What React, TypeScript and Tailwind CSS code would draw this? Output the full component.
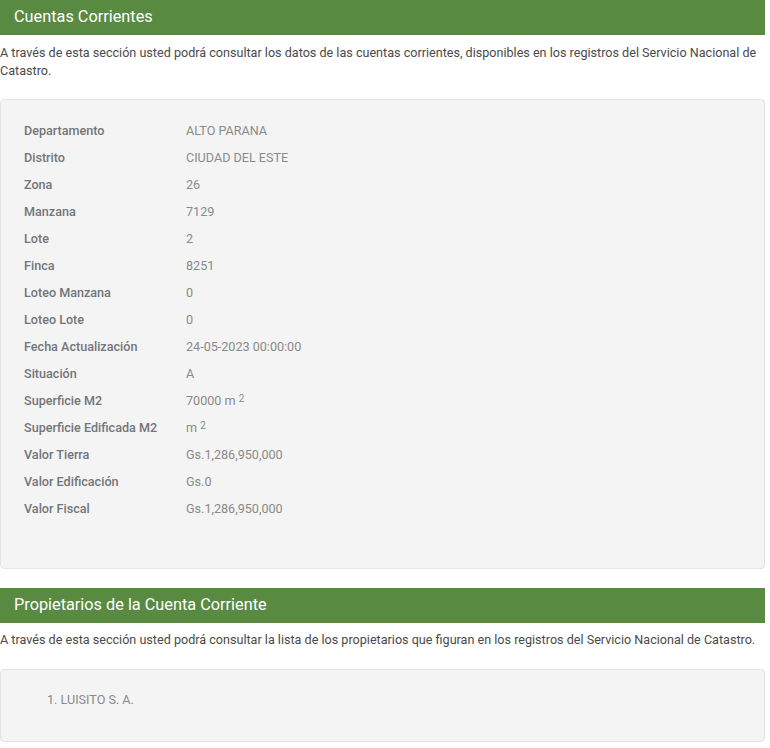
import React from "react";

const rows: [string, React.ReactNode][] = [
  ["Departamento", "ALTO PARANA"],
  ["Distrito", "CIUDAD DEL ESTE"],
  ["Zona", "26"],
  ["Manzana", "7129"],
  ["Lote", "2"],
  ["Finca", "8251"],
  ["Loteo Manzana", "0"],
  ["Loteo Lote", "0"],
  ["Fecha Actualización", "24-05-2023 00:00:00"],
  ["Situación", "A"],
  ["Superficie M2", <>70000 m <sup className="text-[10px] relative top-[-3px]">2</sup></>],
  ["Superficie Edificada M2", <>m <sup className="text-[10px] relative top-[-3px]">2</sup></>],
  ["Valor Tierra", "Gs.1,286,950,000"],
  ["Valor Edificación", "Gs.0"],
  ["Valor Fiscal", "Gs.1,286,950,000"],
];

export default function App() {
  return (
    <div className="w-[765px] bg-white text-[12.6px] text-[#4a4a4a] font-['Roboto',_'Liberation_Sans',_sans-serif]">
      <div className="h-[35px] bg-[#588a42] flex items-center pl-[14px] text-white text-[16.3px]">
        Cuentas Corrientes
      </div>
      <p className="mt-[9px] leading-[18px] whitespace-nowrap">
        A través de esta sección usted podrá consultar los datos de las cuentas corrientes, disponibles en los registros del Servicio Nacional de
        <br />
        Catastro.
      </p>
      <div className="mt-[19px] h-[470px] bg-[#f4f4f4] border border-[#e3e3e3] rounded-[4px] pt-[18px] pl-[23px]">
        {rows.map(([k, v]) => (
          <div key={k} className="flex h-[27px] items-center">
            <div className="w-[162px] font-medium text-[#72767a]">{k}</div>
            <div className="text-[#8a8a8a]">{v}</div>
          </div>
        ))}
      </div>
      <div className="mt-[19px] h-[35px] bg-[#588a42] flex items-center pl-[14px] text-white text-[16.3px]">
        Propietarios de la Cuenta Corriente
      </div>
      <p className="mt-[8px] leading-[18px] whitespace-nowrap">
        A través de esta sección usted podrá consultar la lista de los propietarios que figuran en los registros del Servicio Nacional de Catastro.
      </p>
      <div className="mt-[20px] h-[73px] bg-[#f4f4f4] border border-[#e3e3e3] rounded-[4px] pt-[21px] pl-[46px] leading-[18px] text-[#8a8a8a]">
        1. LUISITO S. A.
      </div>
    </div>
  );
}
